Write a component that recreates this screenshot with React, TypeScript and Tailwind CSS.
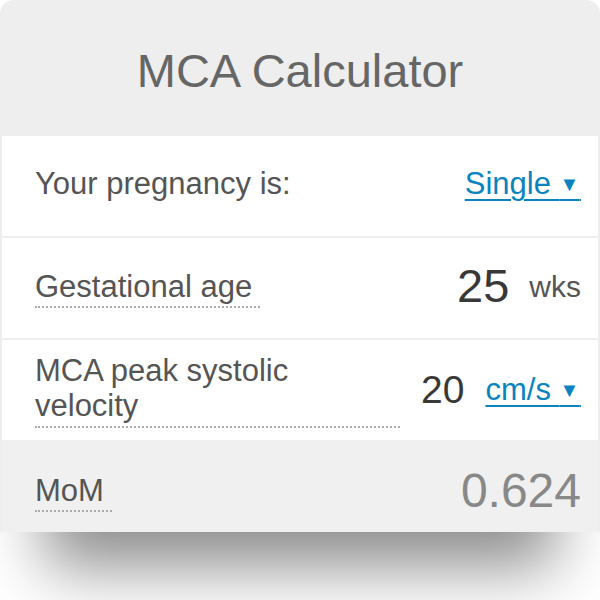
import React from "react";

const font = { fontFamily: '"Liberation Sans", Arial, sans-serif' };

function Caret() {
  return (
    <>
      {"\u00a0"}
      <span className="text-[20px] align-[3px]">▼</span>
      <span className="text-[6px]">{"\u00a0"}</span>
    </>
  );
}

export default function App() {
  return (
    <div className="w-[600px] h-[600px] bg-white" style={font}>
      <div className="rounded-t-[14px] bg-[#eeeeee] px-[2px] shadow-[0_80px_60px_-45px_rgba(0,0,0,0.45)]">
        {/* Header */}
        <div className="h-[136px] flex items-center justify-center pt-[4px]">
          <h1 className="text-[47px] text-[#666666] leading-none">MCA Calculator</h1>
        </div>

        {/* Pregnancy type */}
        <div className="h-[100px] bg-white flex items-center justify-between pl-[33px] pr-[17px] pb-[4px]">
          <span className="text-[31px] text-[#555555]">Your pregnancy is:</span>
          <span className="text-[31px] text-[#0a83c0] underline underline-offset-[5px] decoration-2">
            Single
            <Caret />
          </span>
        </div>

        {/* Gestational age */}
        <div className="h-[100px] mt-[2px] bg-white flex items-center justify-between pl-[33px] pr-[17px]">
          <span className="text-[31px] text-[#555555] leading-[38px] pr-[8px] border-b-2 border-dotted border-[#aaaaaa]">
            Gestational age
          </span>
          <div className="flex items-center gap-[20px] pb-[4px]">
            <span className="text-[47px] text-[#383838]">25</span>
            <span className="text-[30px] text-[#555555]">wks</span>
          </div>
        </div>

        {/* MCA PSV */}
        <div className="h-[100px] mt-[2px] bg-white flex items-center justify-between pl-[33px] pr-[17px]">
          <span className="w-[365px] text-[31px] text-[#555555] leading-[35px] pb-[3px] border-b-2 border-dotted border-[#aaaaaa]">
            MCA peak systolic velocity
          </span>
          <div className="flex items-center gap-[21px]">
            <span className="text-[39px] text-[#383838]">20</span>
            <span className="text-[31px] text-[#0a83c0] underline underline-offset-[5px] decoration-2">
              cm/s
              <Caret />
            </span>
          </div>
        </div>

        {/* Result */}
        <div className="h-[92px] bg-[#f0f0f0] flex items-center justify-between pl-[33px] pr-[17px]">
          <span className="text-[31px] text-[#555555] leading-[38px] pr-[8px] border-b-2 border-dotted border-[#aaaaaa] mt-[11px]">
            MoM
          </span>
          <span className="text-[48px] text-[#888888] mt-[10px]">0.624</span>
        </div>
      </div>
    </div>
  );
}
